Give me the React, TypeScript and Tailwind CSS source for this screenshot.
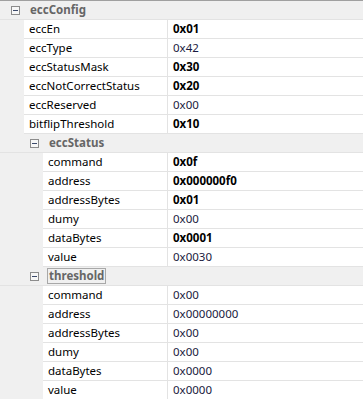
import React from "react";

type Prop = { name: string; value: string; changed?: boolean };
type Group = { title: string; level: number; focused?: boolean; rows: Prop[] };

const groups: Group[] = [
  {
    title: "eccConfig",
    level: 0,
    rows: [
      { name: "eccEn", value: "0x01", changed: true },
      { name: "eccType", value: "0x42" },
      { name: "eccStatusMask", value: "0x30", changed: true },
      { name: "eccNotCorrectStatus", value: "0x20", changed: true },
      { name: "eccReserved", value: "0x00" },
      { name: "bitflipThreshold", value: "0x10", changed: true },
    ],
  },
  {
    title: "eccStatus",
    level: 1,
    rows: [
      { name: "command", value: "0x0f", changed: true },
      { name: "address", value: "0x000000f0", changed: true },
      { name: "addressBytes", value: "0x01", changed: true },
      { name: "dumy", value: "0x00" },
      { name: "dataBytes", value: "0x0001", changed: true },
      { name: "value", value: "0x0030" },
    ],
  },
  {
    title: "threshold",
    level: 1,
    focused: true,
    rows: [
      { name: "command", value: "0x00" },
      { name: "address", value: "0x00000000" },
      { name: "addressBytes", value: "0x00" },
      { name: "dumy", value: "0x00" },
      { name: "dataBytes", value: "0x0000" },
      { name: "value", value: "0x0000" },
    ],
  },
];

function Collapse() {
  return (
    <span className="flex h-[9px] w-[9px] items-center justify-center border border-[#8c8c8c] bg-[#f7f7f7]">
      <span className="h-px w-[5px] bg-[#3c4a6b]" />
    </span>
  );
}

function GroupHeader({ g }: { g: Group }) {
  const indent = g.level === 0 ? "pl-[11px]" : "pl-[30px]";
  return (
    <div className={`flex h-[19px] items-center border-b border-[#e3e3e3] ${indent}`}>
      <Collapse />
      <span
        className={`ml-[8px] px-[1px] font-bold leading-[14px] text-[#666666] ${
          g.focused ? "border border-[#a8a8a8]" : "border border-transparent"
        }`}
      >
        {g.title}
      </span>
    </div>
  );
}

function Row({ p, level }: { p: Prop; level: number }) {
  const indent = level === 0 ? "w-[24px]" : "w-[43px]";
  return (
    <div className="flex h-[19px]">
      <div className={`${indent} shrink-0`} />
      <div className="flex flex-1 border-b border-[#e3e3e3] bg-white">
        <div className="flex flex-1 items-center border-r border-[#e3e3e3] pl-[5px] text-black">
          {p.name}
        </div>
        <div
          className={`flex w-[195px] items-center pl-[5px] ${
            p.changed ? "font-bold text-black" : "text-[#1a1a40]"
          }`}
        >
          {p.value}
        </div>
      </div>
    </div>
  );
}

export default function App() {
  return (
    <div
      className="h-[399px] w-[363px] overflow-hidden border-t border-[#a0a0a0] bg-[#f0f0f0] text-[11.5px]"
      style={{ fontFamily: '"Noto Sans", "Open Sans", sans-serif' }}
    >
      {groups.map((g) => (
        <div key={g.title}>
          <GroupHeader g={g} />
          {g.rows.map((p) => (
            <Row key={g.title + p.name} p={p} level={g.level} />
          ))}
        </div>
      ))}
    </div>
  );
}
